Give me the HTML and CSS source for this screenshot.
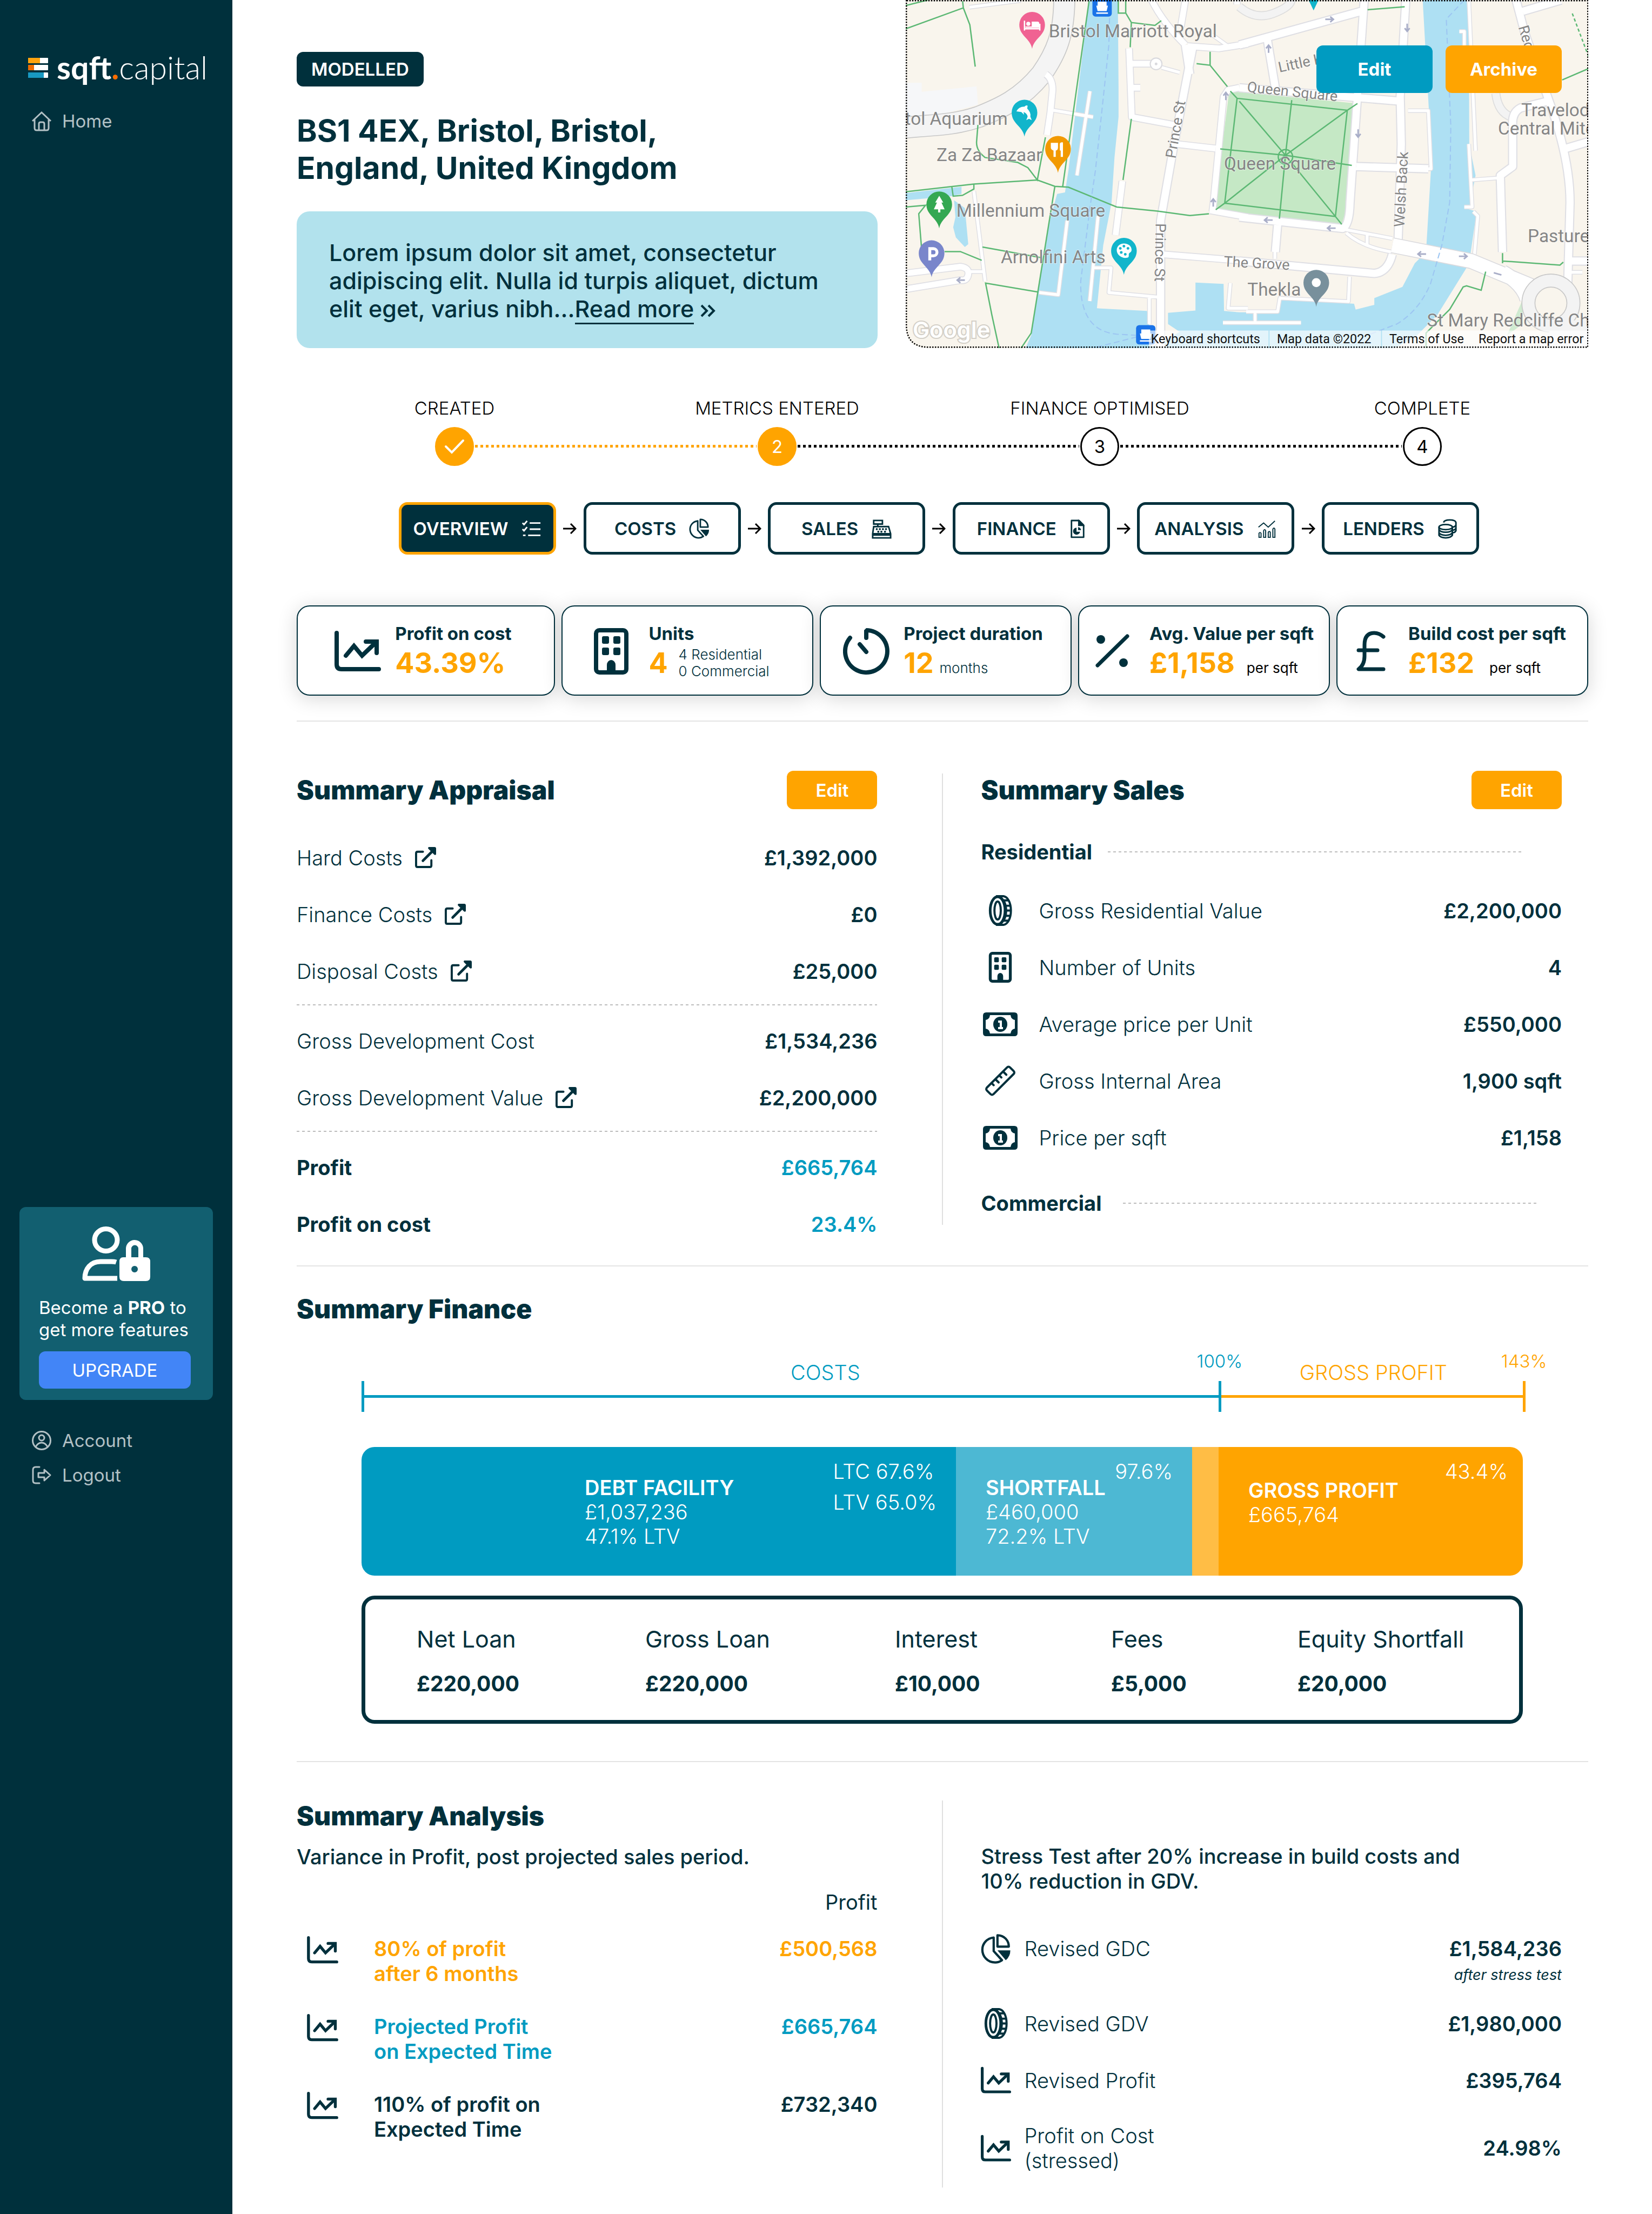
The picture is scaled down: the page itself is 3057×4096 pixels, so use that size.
FILE: index.html
```html
<!DOCTYPE html>
<html lang="en">
<head>
<meta charset="utf-8">
<title>sqft.capital – BS1 4EX, Bristol</title>
<meta name="viewport" content="width=device-width, initial-scale=1">
<link rel="stylesheet" href="styles.css">
</head>
<body>
<svg class="sprite" aria-hidden="true">
  <symbol id="i-trend" viewBox="0 0 86 76"><path d="M4 4V62Q4 71 13 71H82M21 46 36 28 51 46 76 22" fill="none" stroke="currentColor" stroke-width="8" stroke-linecap="round" stroke-linejoin="miter"/><path d="M58 20H78V41" fill="none" stroke="currentColor" stroke-width="8" stroke-linecap="round"/></symbol>
  <symbol id="i-building" viewBox="0 0 64 86"><rect x="4" y="4" width="56" height="78" rx="6" fill="none" stroke="currentColor" stroke-width="8"/><g fill="currentColor"><rect x="15" y="15" width="13" height="14" rx="3"/><rect x="36" y="15" width="13" height="14" rx="3"/><rect x="15" y="36" width="13" height="14" rx="3"/><rect x="36" y="36" width="13" height="14" rx="3"/><path d="M24 82V68a8 9 0 0 1 16 0V82Z"/></g></symbol>
  <symbol id="i-open" viewBox="0 0 40 40"><path d="M15 9H5Q2 9 2 12V35Q2 38 5 38H28Q31 38 31 35V25" fill="none" stroke="currentColor" stroke-width="4" stroke-linecap="round"/><path d="M15 26 34 7" stroke="currentColor" stroke-width="5" stroke-linecap="round"/><path d="M26 0H37Q40 0 40 3V14Q38 16 36 14L25 3Q24 1 26 0Z" fill="currentColor"/></symbol>
  <symbol id="i-coin" viewBox="0 0 44 58"><path d="M14 2H28C36 3 42 14 42 29S36 55 28 56H14" fill="none" stroke="currentColor" stroke-width="4"/><ellipse cx="17" cy="29" rx="14" ry="26" fill="none" stroke="currentColor" stroke-width="5"/><ellipse cx="17" cy="29" rx="6" ry="17" fill="none" stroke="currentColor" stroke-width="4"/><path d="M27 10H37M30 20H41M31 29H42M30 39H41M27 48H37M22 4Q33 12 33 29T22 54" fill="none" stroke="currentColor" stroke-width="4"/></symbol>
  <symbol id="i-note" viewBox="0 0 64 44"><path fill="currentColor" fill-rule="evenodd" d="M6 0H58Q64 0 64 6V38Q64 44 58 44H6Q0 44 0 38V6Q0 0 6 0ZM13 5Q12 13 5 14V30Q12 31 13 39H51Q52 31 59 30V14Q52 13 51 5Z"/><ellipse cx="32" cy="22" rx="13" ry="14" fill="currentColor"/><path d="M28 17H33V29M28 29H37" fill="none" stroke="#fff" stroke-width="4"/></symbol>
  <symbol id="i-ruler" viewBox="0 0 56 56"><path d="M40 4Q43 1 46 4L52 10Q55 13 52 16L16 52Q13 55 10 52L4 46Q1 43 4 40ZM33 11l6 6M26 18l4 4M19 25l6 6M12 32l4 4" fill="none" stroke="currentColor" stroke-width="4" stroke-linecap="round" stroke-linejoin="round"/></symbol>
  <symbol id="i-pie" viewBox="0 0 40 40"><path d="M17 5C8 6 2 13 2 21C2 30 9 38 19 38C22 38 25 37 28 35L17 23Z" fill="none" stroke="currentColor" stroke-width="3" stroke-linejoin="round"/><path d="M22 2V17H37C37 9 31 2 22 2Z" fill="none" stroke="currentColor" stroke-width="3" stroke-linejoin="round"/><path d="M22 22H39Q39 30 33 35Z" fill="currentColor"/></symbol>
  <symbol id="i-next" viewBox="0 0 26 20"><path d="M1 10H24M15 1 24 10 15 19" fill="none" stroke="currentColor" stroke-width="3"/></symbol>
</svg>

<aside class="sidebar">
  <a class="logo" href="#">
    <svg class="logo-mark" viewBox="0 0 37 37" aria-hidden="true"><g fill="#fff"><rect width="37" height="10" rx="1"/><rect y="13" width="37" height="10" rx="1"/><rect y="27" width="37" height="10" rx="1"/></g><path fill="#ffa30f" d="M0 0h22v10H0z"/><path fill="#f06c00" d="M0 13h11v10H0z"/><path fill="#1899c2" d="M0 27h29v10H0z"/></svg>
    <span class="logo-text"><b>sqft<i>.</i></b>capital</span>
  </a>
  <nav class="side-nav">
    <a href="#"><svg viewBox="0 0 38 38" aria-hidden="true"><path d="M2 19 19 3 36 19M6 16V32Q6 36 10 36H28Q32 36 32 32V16M14 36V24Q14 21 17 21H21Q24 21 24 24V36" fill="none" stroke="currentColor" stroke-width="3"/></svg>Home</a>
  </nav>
  <section class="promo">
    <svg class="promo-icon" viewBox="0 0 126 101" aria-hidden="true"><ellipse cx="44" cy="25" rx="21" ry="20.500" fill="none" stroke="#fff" stroke-width="9"/><path d="M63 66Q60 65 54 65H34C16 65 5 78 5 96H65" fill="none" stroke="#fff" stroke-width="9" stroke-linejoin="round"/><path fill="#fff" fill-rule="evenodd" d="M76 57H81V41A16 16 0 0 1 113 41V57H118Q126 57 126 65V93Q126 101 118 101H77Q69 101 69 93V65Q69 57 76 57ZM91 57H104V41A6 6 0 0 0 91 41ZM97 73a6 6 0 1 0 .1 0Z"/></svg>
    <p>Become a <b>PRO</b> to<br>get more features</p>
    <button type="button">UPGRADE</button>
  </section>
  <nav class="side-nav side-nav-end">
    <a href="#"><svg viewBox="0 0 38 38" aria-hidden="true"><g fill="none" stroke="currentColor" stroke-width="3"><circle cx="19" cy="19" r="16.500"/><circle cx="19" cy="14" r="5"/><path d="M8 31Q12 23 19 23T30 31"/></g></svg>Account</a>
    <a href="#"><svg viewBox="0 0 38 38" aria-hidden="true"><path d="M15 4H8Q3 4 3 9V29Q3 34 8 34H15M13 15H24V9L35 19 24 29V23H13Z" fill="none" stroke="currentColor" stroke-width="3" stroke-linecap="round" stroke-linejoin="round"/></svg>Logout</a>
  </nav>
</aside>

<main>
  <header class="intro">
    <div class="intro-text">
      <span class="badge">MODELLED</span>
      <h1>BS1 4EX, Bristol, Bristol,<br>England, United Kingdom</h1>
      <p class="blurb">Lorem ipsum dolor sit amet, consectetur<br>adipiscing elit. Nulla id turpis aliquet, dictum<br>elit eget, varius nibh...<a href="#">Read more</a> <svg viewBox="0 0 28 24" aria-hidden="true"><path d="M2 2 12 12 2 22M15 2 25 12 15 22" fill="none" stroke="currentColor" stroke-width="4"/></svg></p>
    </div>
    <div class="map">
      <svg class="map-art" viewBox="47 0 3035 1547" preserveAspectRatio="xMidYMid slice" role="img" aria-label="Map of central Bristol">
        <defs>
          <g id="w-s"><path d="M330 32 560 2M350 850 400 1250M330 1207H390M703 490 880 520M866 405 808 780M765 980 725 1310 640 1300M902 960 865 1338M880 1190H960L950 1300 1165 1320M1130 1320V1440M1185 300 1265 322M1490 1258 1480 1370H1568M1410 155 1480 205M1457 1434H1804M2280 492H2370L2382 750H2040M2000 1020 2210 1060M2005 1035Q2080 1100 2210 1120M2098 1045V1085M2020 1230 2015 1340 1710 1325 1700 1385H1560M1600 1385V1434M2508 140H2530V210M2550 0 2580 670M2550 640 2565 920H2530M2560 800 2690 790M2570 940 2590 960 2575 1130M2980 1210H3055M1688 1060V1150"/></g>
          <g id="w-m"><path d="M670 330Q700 350 700 400L690 500 675 600M1040 215 1052 520 1240 555M1050 283H1160M1055 390H1090M1010 805 980 1045M1250 640 1425 660M1185 1130 1560 1160M47 1215 290 1185Q330 1190 325 1220T290 1245L47 1285M1300 205 1440 215 1568 195M1140 0Q1190 100 1290 200M1290 0 1270 120M1400 935 1568 965M1520 0V20"/><path d="M1530 390 1480 400 1460 430 1415 900 1410 940"/></g>
          <g id="w-l"><path d="M1325 200 1240 640 1180 980V1548M1290 200 1310 330M1530 200 2080 48M1530 390 2250 450M1530 965 1990 1015Q2020 1000 2022 900L2085 0M2270 0 2245 430 2250 640 2235 1090M1655 180 1690 390M1700 1000 1690 1120M2050 740 2370 750M1530 1160 2130 1215Q2190 1210 2210 1130M2760 0 2800 150 2900 430Q3000 700 3000 900L2990 1260M2790 50 2960 0M2980 660 3082 630M2990 1160H3082M2900 450 2780 480Q2740 500 2745 560V740L2690 780 2700 1120"/></g>
        </defs>
        <rect class="land" x="47" width="3035" height="1547"/>
        <path fill="#f6f7f9" d="M47 368H118V408L362 384 368 465 200 510 47 525Z"/>
        <path class="water" d="M862 0H990L993 380V520L975 700 962 900 925 1090 897 1370 1120 1382 1140 1547H580L605 1490 635 1300 690 970 720 862 755 855 770 760Z"/>
        <path class="water" d="M2345 0H2550L2552 640 2580 780 2550 930 2585 940 2558 1125 2540 1190 2410 1400 2310 1500 2220 1547H1130L1265 1475 1213 1440V1390L1335 1380V1256L1460 1262 1462 1382 1530 1388H1690L1715 1325 2040 1350 2047 1376 2130 1355V1325L2255 1275 2310 1170 2330 1150 2362 1085 2385 700 2372 480Z"/>
        <path class="water" d="M47 858 295 830V862L250 872 47 890ZM262 890 310 925 325 1085 310 1098 270 1055 258 1010 268 965Z"/>
        <path fill="#c5e8c5" d="M1485 405 2055 460 2022 880 1985 997 1425 935 1460 600Z"/>
        <path fill="#cfead0" d="M2790 1330 2720 1490 2790 1440Z"/>
        <g class="major"><path d="M752 0C750 150 720 230 650 330C560 440 470 480 370 520C250 560 150 555 47 567"/></g>
        <g class="major in"><path d="M752 0C750 150 720 230 650 330C560 440 470 480 370 520C250 560 150 555 47 567"/></g>
        <path d="M1530 30Q1600 90 1680 60T1760 0M2670 415Q2680 500 2740 520" fill="none" stroke="#ddd" stroke-width="40"/><path d="M1530 30Q1600 90 1680 60T1760 0M2670 415Q2680 500 2740 520" fill="none" stroke="#f3f3f3" stroke-width="32"/>
        <g class="case"><use href="#w-s" stroke-width="20"/><use href="#w-m" stroke-width="34"/><use href="#w-l" stroke-width="42"/></g>
        <g class="road"><use href="#w-s" stroke-width="13"/><use href="#w-m" stroke-width="26"/><use href="#w-l" stroke-width="32"/></g>
        <path d="M2210 1090 2560 1160 2850 1280M2700 1210Q2790 1260 2810 1330" fill="none" stroke="#dadade" stroke-width="70"/>
        <path d="M2210 1090 2560 1160 2850 1280M2700 1210Q2790 1260 2810 1330" fill="none" stroke="#fff" stroke-width="62"/>
        <circle cx="2915" cy="1347" r="100" fill="none" stroke="#c8c8c8" stroke-width="62"/><path d="M2930 1450Q2980 1420 3082 1420V1547H2840Z" fill="#f3f3f3"/><circle cx="2915" cy="1347" r="100" fill="none" stroke="#f3f3f3" stroke-width="54"/>
        <circle cx="1160" cy="284" r="26" fill="#fff" stroke="#dadade" stroke-width="5"/><circle cx="1160" cy="284" r="6" fill="#dadade"/>
        <path class="walk" d="M47 25 145 0M47 128 303 35 300 5M303 35 332 110 356 296M862 5 745 828M668 610 632 800 590 745 545 722 400 700Q360 670 362 630L368 555M47 852 350 818 632 800 710 828 770 832 985 920 1165 938 1310 958 1395 950M710 828 605 1480 560 1547M350 820V840L300 868 258 872 252 830M47 920 135 912 105 950 118 1110M220 1118H290L385 1157M388 1098 650 1145M462 1547 430 1400 402 1258 632 1297M992 0V58H1025V0M1025 58 1050 100 1155 113 1183 92M1050 100 1045 210M1050 528 1013 800M1340 283 1400 290V230M1400 290 1477 385M1490 405 1520 437 2010 490 2055 460M2010 490 1957 962 1985 997M1957 962 1465 903 1425 932M1520 437 1465 903M1530 450 1735 690 1957 962M2010 490 1735 690 1465 903M1445 662 1735 690 2030 735M1763 445 1735 690 1708 972M2100 43 2265 30M2965 355 3082 305M2700 1125V1170M2700 1160 2955 1178 2970 1165M2625 1207 2605 1290 2540 1270 2525 1275 2465 1375 2360 1480V1547"/>
        <circle class="walk" cx="1735" cy="697" r="32" fill="#c5e8c5"/>
        <path class="walk" stroke-dasharray="14 10" d="M3010 60 3082 250"/>
        <path d="M955 0 950 200 915 530 890 760 865 930 825 1250Q820 1470 985 1485L1070 1490M1075 1497 880 1547M2530 0 2450 85 2470 560 2465 900 2430 1090 2380 1260Q2330 1380 2230 1440L2100 1490" fill="none" stroke="#9dc6f2" stroke-width="5" stroke-dasharray="26 14"/>
        <g fill="none" stroke="#a9aec8" stroke-width="7"><path d="M1912 86h38m-16-12 14 12-14 12M1660 235v-32m-11 12 11-14 11 14M2276 105v32m-11-12 11 14 11-14M2058 575v32m-11-12 11 14 11-14M1678 978h-38m16-12-14 12 14 12M1958 1014h-38m16-12-14 12 14 12M2360 1129h-38m16-12-14 12 14 12M2506 1139h38m-16-12 14 12-14 12M2695 1222l-34-10M310 1245h-34m14-12-14 12 14 12M1470 445v-32m-11 12 11-14 11 14M1414 918v-32m-11 12 11-14 11 14"/></g>
        <g class="place">
          <text x="683" y="165">Bristol Marriott Royal</text>
          <text x="500" y="556" text-anchor="end">Bristol Aquarium</text>
          <text x="184" y="716">Za Za Bazaar</text>
          <text x="272" y="963">Millennium Square</text>
          <text x="470" y="1169">Arnolfini Arts</text>
          <text x="1462" y="755">Queen Square</text>
          <text x="1566" y="1313">Thekla</text>
          <text x="2783" y="516">Travelodge</text>
          <text x="2680" y="597">Central Mitchell</text>
          <text x="2812" y="1077">Pastures</text>
          <text x="2364" y="1450">St Mary Redcliffe Church</text>
        </g>
        <g class="street">
          <text transform="translate(1246 706) rotate(-80)">Prince St</text>
          <text transform="translate(1158 992) rotate(91)">Prince St</text>
          <text transform="translate(1708 322) rotate(-12)">Little King St</text>
          <text transform="translate(1563 408) rotate(6)">Queen Square</text>
          <text transform="translate(1460 1184) rotate(3)">The Grove</text>
          <text transform="translate(2263 1010) rotate(-87)">Welsh Back</text>
          <text transform="translate(2770 120) rotate(74)">Redcliff St</text>
        </g>
        <g class="pins">
          <g transform="translate(609 110)"><path fill="#f06292" d="M0 107C-8 60-57 50-57 0A57 57 0 1 1 57 0C57 50 8 60 0 107Z"/><path d="M-34-18V26M-34 18H34M34-4V26" fill="none" stroke="#fff" stroke-width="6"/><path d="M-30 14V8H-2V-14H24Q32-14 32-4V14Z" fill="#fff"/><circle cx="-17" cy="-4" r="9" fill="#fff"/></g>
          <g transform="translate(575 500)"><path fill="#12b5cb" d="M0 107C-8 60-57 50-57 0A57 57 0 1 1 57 0C57 50 8 60 0 107Z"/><path fill="#fff" d="M-36-5Q-26-26 0-26Q8-34 14-30L12-18Q30 0 26 18L32 34 20 28 8 34 14 18Q10 2-4-2L-2 10-14-2Z"/></g>
          <g transform="translate(724 661)"><path fill="#f29900" d="M0 107C-8 60-57 50-57 0A57 57 0 1 1 57 0C57 50 8 60 0 107Z"/><path fill="#fff" d="M-32-26H0V-6Q0 6-10 8V36H-20V8Q-32 4-32-6ZM8-22Q10-30 22-28V36H12V8H8Z"/></g>
          <g transform="translate(196 908)"><path fill="#34a853" d="M0 107C-8 60-57 50-57 0A57 57 0 1 1 57 0C57 50 8 60 0 107Z"/><path fill="#fff" d="M0-38 18-8H10L24 22H5V36H-5V22H-24L-10-8H-18Z"/></g>
          <g transform="translate(162 1125)"><path fill="#7986cb" d="M0 107C-8 60-57 50-57 0A57 57 0 1 1 57 0C57 50 8 60 0 107Z"/><path d="M-8 32V-20H8A16 16 0 0 1 8 12H-8" fill="none" stroke="#fff" stroke-width="13"/></g>
          <g transform="translate(1017 1114)"><path fill="#12b5cb" d="M0 107C-8 60-57 50-57 0A57 57 0 1 1 57 0C57 50 8 60 0 107Z"/><path fill="#fff" d="M0-32C20-32 34-20 34-4C34 8 24 8 22 14C20 22 26 32 10 32C-10 34-32 18-32-2C-32-20-18-32 0-32Z"/><g fill="#12b5cb"><circle cx="-16" cy="-10" r="6"/><circle cx="0" cy="-20" r="6"/><circle cx="18" cy="-10" r="6"/><circle cx="-12" cy="8" r="6"/><circle cx="6" cy="16" r="6"/></g></g>
          <g transform="translate(1872 1256)"><path fill="#78909c" d="M0 107C-8 60-57 50-57 0A57 57 0 1 1 57 0C57 50 8 60 0 107Z"/><circle r="20" fill="#fff"/></g>
          <path fill="#12b5cb" d="M1838 0H1882L1860 46Z"/>
          <g transform="translate(920 31)"><rect x="-43" y="-43" width="86" height="86" rx="14" fill="#1a73e8"/><path fill="#fff" d="M-20-24H20V-6H26L20 18H-20L-26-6H-20ZM-26 24H26V30H-26Z"/></g>
          <g transform="translate(1114 1488)"><rect x="-43" y="-43" width="86" height="86" rx="14" fill="#1a73e8"/><path fill="#fff" d="M-20-24H20V-6H26L20 18H-20L-26-6H-20ZM-26 24H26V30H-26Z"/></g>
        </g>
        <text class="brand" x="78" y="1502">Google</text>
        <path fill="#fff" fill-opacity=".65" d="M1128 1469H1660V1547H1128ZM1664 1469H2160V1547H1664ZM2164 1469H3082V1547H2164Z"/>
        <g class="credits"><text x="1137" y="1525">Keyboard shortcuts</text><text x="1697" y="1525">Map data ©2022</text><text x="2197" y="1525">Terms of Use</text><text x="2593" y="1525">Report a map error</text></g>
        <path fill="#fff" d="M47 1447V1547H147Q47 1547 47 1447Z"/>
        <path d="M50 0V1447Q52 1542 147 1543H3079V3H50" fill="none" stroke="#000" stroke-width="6" stroke-dasharray="6 6"/>
      </svg>
      <div class="map-actions">
        <button class="btn btn-lg btn-teal" type="button">Edit</button>
        <button class="btn btn-lg" type="button">Archive</button>
      </div>
    </div>
  </header>

  <ol class="steps">
    <li class="step done"><span>CREATED</span><i><svg viewBox="0 0 36 28" aria-hidden="true"><path d="M2 14 13 25 34 3" fill="none" stroke="#fff" stroke-width="4" stroke-linecap="round"/></svg></i></li>
    <li class="link done" aria-hidden="true"></li>
    <li class="step done"><span>METRICS ENTERED</span><i>2</i></li>
    <li class="link" aria-hidden="true"></li>
    <li class="step"><span>FINANCE OPTIMISED</span><i>3</i></li>
    <li class="link" aria-hidden="true"></li>
    <li class="step"><span>COMPLETE</span><i>4</i></li>
  </ol>

  <nav class="tabs" aria-label="Project sections">
    <a class="tab active" href="#">OVERVIEW<svg viewBox="0 0 40 40" aria-hidden="true"><path d="M3 9 6 12 12 5M3 21 6 24 12 17M17 9H38M17 21H38M14 33H38M4 33H9" fill="none" stroke="currentColor" stroke-width="3"/></svg></a>
    <svg class="next" aria-hidden="true"><use href="#i-next"/></svg>
    <a class="tab" href="#">COSTS<svg aria-hidden="true"><use href="#i-pie"/></svg></a>
    <svg class="next" aria-hidden="true"><use href="#i-next"/></svg>
    <a class="tab" href="#">SALES<svg viewBox="0 0 40 40" aria-hidden="true"><g fill="none" stroke="currentColor" stroke-width="3"><path d="M5 4H22V11H5ZM13 11V16M5 16H34L38 30V38H3V30ZM3 30H38"/></g><g fill="currentColor"><path d="M3 31H38V34H3Z"/><circle cx="11" cy="21" r="2"/><circle cx="17" cy="21" r="2"/><circle cx="23" cy="21" r="2"/><circle cx="29" cy="21" r="2"/><circle cx="14" cy="26" r="2"/><circle cx="20" cy="26" r="2"/><circle cx="27" cy="26" r="2"/></g></svg></a>
    <svg class="next" aria-hidden="true"><use href="#i-next"/></svg>
    <a class="tab" href="#">FINANCE<svg class="slim" viewBox="4 0 32 40" aria-hidden="true"><path d="M8 4H23L32 13V37H8Z" fill="none" stroke="currentColor" stroke-width="3" stroke-linejoin="round"/><path d="M22 4V14H32Z" fill="currentColor" stroke="currentColor" stroke-width="2"/><path d="M18 18V26H25A7 7 0 1 1 18 18ZM21 17A7 7 0 0 1 27 23H21Z" fill="currentColor"/></svg></a>
    <svg class="next" aria-hidden="true"><use href="#i-next"/></svg>
    <a class="tab" href="#">ANALYSIS<svg viewBox="0 0 40 40" aria-hidden="true"><path d="M4 17 14 9 23 17 36 5M5 37V29Q7 26 9 29V37ZM14 37V24Q16 20 18 24V37ZM23 37V27Q25 24 27 27V37ZM32 37V21Q34 17 36 21V37Z" fill="none" stroke="currentColor" stroke-width="2"/></svg></a>
    <svg class="next" aria-hidden="true"><use href="#i-next"/></svg>
    <a class="tab" href="#">LENDERS<svg viewBox="0 0 40 40" aria-hidden="true"><g fill="none" stroke="currentColor" stroke-width="3"><ellipse cx="16" cy="17" rx="13" ry="5"/><path d="M3 17V33Q6 38 16 38T29 33V17M3 22Q6 27 16 27T29 22M3 28Q6 33 16 33T29 28M12 8Q13 3 24 3T36 8V24Q34 28 29 28M36 13Q34 17 29 17M36 19Q34 23 29 23"/></g></svg></a>
  </nav>

  <section class="metrics" aria-label="Key metrics">
    <article class="metric"><svg aria-hidden="true"><use href="#i-trend"/></svg><div><h3>Profit on cost</h3><p><b>43.39%</b></p></div></article>
    <article class="metric metric-units"><svg aria-hidden="true"><use href="#i-building"/></svg><div><h3>Units</h3><p><b>4</b><span>4 Residential<br>0 Commercial</span></p></div></article>
    <article class="metric metric-time"><svg viewBox="0 0 86 86" aria-hidden="true"><path d="M43 18V4A39 39 0 1 1 13 18M31 30 43 44" fill="none" stroke="currentColor" stroke-width="8" stroke-linecap="round" stroke-linejoin="bevel"/></svg><div><h3>Project duration</h3><p><b>12</b><span>months</span></p></div></article>
    <article class="metric metric-rate"><svg viewBox="0 0 86 86" aria-hidden="true"><path d="M71 15 16 69" stroke="currentColor" stroke-width="7" stroke-linecap="round"/><circle cx="22" cy="21" r="8" fill="currentColor"/><circle cx="64" cy="64" r="8" fill="currentColor"/></svg><div><h3>Avg. Value per sqft</h3><p><b>£1,158</b><span>per sqft</span></p></div></article>
    <article class="metric metric-rate metric-build"><svg viewBox="0 0 86 86" aria-hidden="true"><path d="M66 16Q58 9 49 9Q31 9 31 31V52Q31 68 20 76H66M20 41H55" fill="none" stroke="currentColor" stroke-width="7" stroke-linecap="round" stroke-linejoin="round"/></svg><div><h3>Build cost per sqft</h3><p><b>£132</b><span>per sqft</span></p></div></article>
  </section>

  <section class="split split-top">
    <div class="appraisal">
      <div class="head"><h2>Summary Appraisal</h2><button class="btn" type="button">Edit</button></div>
      <dl class="rows">
        <div><dt>Hard Costs <a href="#" aria-label="Open hard costs"><svg><use href="#i-open"/></svg></a></dt><dd>£1,392,000</dd></div>
        <div><dt>Finance Costs <a href="#" aria-label="Open finance costs"><svg><use href="#i-open"/></svg></a></dt><dd>£0</dd></div>
        <div><dt>Disposal Costs <a href="#" aria-label="Open disposal costs"><svg><use href="#i-open"/></svg></a></dt><dd>£25,000</dd></div>
      </dl>
      <hr class="dots">
      <dl class="rows">
        <div><dt>Gross Development Cost</dt><dd>£1,534,236</dd></div>
        <div><dt>Gross Development Value <a href="#" aria-label="Open gross development value"><svg><use href="#i-open"/></svg></a></dt><dd>£2,200,000</dd></div>
      </dl>
      <hr class="dots">
      <dl class="rows total">
        <div><dt>Profit</dt><dd>£665,764</dd></div>
        <div><dt>Profit on cost</dt><dd>23.4%</dd></div>
      </dl>
    </div>
    <div class="rule"></div>
    <div class="sales">
      <div class="head"><h2>Summary Sales</h2><button class="btn" type="button">Edit</button></div>
      <h3 class="group">Residential</h3>
      <dl class="rows icons">
        <div><dt><svg><use href="#i-coin"/></svg>Gross Residential Value</dt><dd>£2,200,000</dd></div>
        <div><dt><svg><use href="#i-building"/></svg>Number of Units</dt><dd>4</dd></div>
        <div><dt><svg class="wide"><use href="#i-note"/></svg>Average price per Unit</dt><dd>£550,000</dd></div>
        <div><dt><svg><use href="#i-ruler"/></svg>Gross Internal Area</dt><dd>1,900 sqft</dd></div>
        <div><dt><svg class="wide"><use href="#i-note"/></svg>Price per sqft</dt><dd>£1,158</dd></div>
      </dl>
      <h3 class="group group-late">Commercial</h3>
    </div>
  </section>

  <section class="finance">
    <h2>Summary Finance</h2>
    <div class="chart">
      <div class="axis">
        <div class="span costs"><span>COSTS</span><i></i><em>100%</em></div>
        <div class="span gross"><span>GROSS PROFIT</span><i></i><em>143%</em></div>
      </div>
      <div class="stack">
        <div class="seg debt"><p><b>DEBT FACILITY</b><br>£1,037,236<br>47.1% LTV</p><p class="pct">LTC 67.6%<br>LTV 65.0%</p></div>
        <div class="seg short"><p><b>SHORTFALL</b><br>£460,000<br>72.2% LTV</p><p class="pct">97.6%</p></div>
        <div class="seg gap"></div>
        <div class="seg profit"><p><b>GROSS PROFIT</b><br>£665,764</p><p class="pct">43.4%</p></div>
      </div>
      <div class="loan">
        <table>
          <colgroup><col class="c1"><col class="c2"><col class="c3"><col class="c4"><col class="c5"></colgroup>
          <thead><tr><th>Net Loan</th><th>Gross Loan</th><th>Interest</th><th>Fees</th><th>Equity Shortfall</th></tr></thead>
          <tbody><tr><td>£220,000</td><td>£220,000</td><td>£10,000</td><td>£5,000</td><td>£20,000</td></tr></tbody>
        </table>
      </div>
    </div>
  </section>

  <section class="split analysis">
    <div>
      <h2>Summary Analysis</h2>
      <p class="lead">Variance in Profit, post projected sales period.</p>
      <p class="col-head">Profit</p>
      <dl class="cases">
        <div class="low"><dt><svg><use href="#i-trend"/></svg><span>80% of profit<br>after 6 months</span></dt><dd>£500,568</dd></div>
        <div class="mid"><dt><svg><use href="#i-trend"/></svg><span>Projected Profit<br>on Expected Time</span></dt><dd>£665,764</dd></div>
        <div><dt><svg><use href="#i-trend"/></svg><span>110% of profit on<br>Expected Time</span></dt><dd>£732,340</dd></div>
      </dl>
    </div>
    <div class="rule"></div>
    <div class="stress">
      <p class="lead">Stress Test after 20% increase in build costs and<br>10% reduction in GDV.</p>
      <dl class="rows icons tight">
        <div class="noted"><dt><svg><use href="#i-pie"/></svg>Revised GDC</dt><dd>£1,584,236<small>after stress test</small></dd></div>
        <div><dt><svg><use href="#i-coin"/></svg>Revised GDV</dt><dd>£1,980,000</dd></div>
        <div><dt><svg><use href="#i-trend"/></svg>Revised Profit</dt><dd>£395,764</dd></div>
        <div class="tall"><dt><svg><use href="#i-trend"/></svg><span>Profit on Cost<br>(stressed)</span></dt><dd>24.98%</dd></div>
      </dl>
    </div>
  </section>
</main>
</body>
</html>
```
FILE: styles.css
```css
:root {
  --navy: #00303c;
  --teal: #009bc1;
  --orange: #ffa400;
  --line: #e4e4e4;
}
* { box-sizing: border-box; }
body {
  margin: 0;
  display: flex;
  min-height: 100vh;
  background: #fff;
  color: var(--navy);
  font: 400 38px/46px Inter, "Liberation Sans", sans-serif;
}
h1, h2, h3, p, dl, dd, ol { margin: 0; padding: 0; }
a { color: inherit; text-decoration: none; }
button { font: inherit; border: 0; cursor: pointer; }
svg { flex: none; display: block; }
.sprite { position: absolute; width: 0; height: 0; }

/* Sidebar */
.sidebar {
  flex: 0 0 430px;
  background: var(--navy);
  display: flex;
  flex-direction: column;
  padding: 92px 36px 0;
}
.logo { display: flex; align-items: center; gap: 16px; margin-left: 16px; height: 66px; }
.logo-mark { width: 37px; height: 37px; }
.logo-text { font: 300 59px/66px Lato, sans-serif; color: #fff; }
.logo-text b { font-weight: 700; }
.logo-text i { font-style: normal; color: #ff6d00; }
.side-nav { display: flex; flex-direction: column; gap: 24px; padding-left: 22px; margin-top: 46px; }
.side-nav a { display: flex; align-items: center; gap: 19px; font-size: 33px; line-height: 40px; color: #b3c1c5; }
.side-nav svg { width: 38px; height: 38px; }
.promo {
  margin-top: 1989px;
  padding: 36px 36px 21px;
  border-radius: 12px;
  background: #125f70;
  color: #fff;
  display: flex;
  flex-direction: column;
}
.promo-icon { width: 126px; height: 101px; align-self: center; }
.promo p { font-size: 33px; line-height: 41px; margin-top: 29px; white-space: nowrap; }
.promo button { height: 69px; margin: 19px 5px 0 0; border-radius: 12px; background: #4285f7; color: #fff; font-size: 33px; }
.side-nav-end { margin-top: 55px; }

/* Page header */
main { flex: 1; min-width: 0; padding: 0 118px 48px 119px; }
.intro { display: grid; grid-template-columns: 1075fr 1264fr; gap: 52px; height: 644px; }
.intro-text { padding-top: 96px; }
.badge {
  display: inline-block;
  padding: 12px 27px;
  border-radius: 12px;
  background: var(--navy);
  color: #fff;
  font-size: 33px;
  font-weight: 600;
  line-height: 40px;
  vertical-align: top;
}
h1 { margin-top: 47px; font-size: 57px; line-height: 69px; font-weight: 700; }
.blurb { margin-top: 46px; padding: 50px 60px 47px; border-radius: 24px; background: #b2e2ed; font-size: 43px; line-height: 52px; font-weight: 500; white-space: nowrap; }
.blurb a { border-bottom: 3px solid; }
.blurb svg { display: inline-block; width: 28px; height: 24px; }
.map { position: relative; }
.map-art { width: 100%; height: 644px; font-family: Roboto, sans-serif; }
.land { fill: #f9f5ed; }
.water { fill: #aee0f3; }
.major { fill: none; stroke: #c8c8c8; stroke-width: 98; }
.major.in { stroke: #f4f4f4; stroke-width: 90; }
.case { fill: none; stroke: #dfdfe4; stroke-linejoin: round; }
.road { fill: none; stroke: #fff; stroke-linejoin: round; }
.walk { fill: none; stroke: #5cb874; stroke-width: 6; }
.place text, .street text { fill: #858585; paint-order: stroke; stroke: #fff; stroke-opacity: .5; stroke-width: 5; }
.place { font-size: 80px; }
.street { font-size: 65px; }
.brand { font: 600 100px Inter, sans-serif; fill: #fff; stroke: #d3cfc7; stroke-width: 10; paint-order: stroke; }
.credits { font-size: 56px; fill: #111; }
.map-actions { position: absolute; top: 84px; right: 49px; display: flex; gap: 24px; }
.btn { width: 167px; height: 71px; padding: 0; border-radius: 12px; background: var(--orange); color: #fff; font-size: 33px; font-weight: 600; }
.btn-lg { width: 215px; height: 88px; font-weight: 700; }
.btn-teal { background: var(--teal); }

/* Progress */
.steps { display: flex; align-items: flex-end; margin: 91px 271px 0 256px; list-style: none; color: #000; font-size: 33px; line-height: 40px; font-weight: 300; }
.step { flex: none; width: 72px; display: flex; flex-direction: column; align-items: center; gap: 15px; white-space: nowrap; }
.step i { width: 72px; height: 72px; border: 3px solid #000; border-radius: 50%; display: grid; place-items: center; font-style: normal; font-weight: 400; font-size: 33px; }
.step.done i { border-color: var(--orange); background: var(--orange); color: #fff; }
.step svg { width: 36px; height: 28px; }
.link { flex: 1; height: 5px; margin: 0 2px 34px; background: repeating-linear-gradient(90deg, #000 0 5px, transparent 5px 10px); }
.link.done { background: repeating-linear-gradient(90deg, var(--orange) 0 5px, transparent 5px 10px); }

.tabs { display: flex; align-items: center; justify-content: space-between; margin: 67px 202px 0 189px; }
.tab { flex: 0 0 291px; height: 97px; border: 5px solid var(--navy); border-radius: 16px; display: flex; align-items: center; justify-content: center; gap: 24px; font-size: 33px; line-height: 40px; font-weight: 600; }
.tab.active { background: var(--navy); border-color: var(--orange); color: #fff; }
.tab svg { width: 38px; height: 38px; }
.tab .slim { width: 30px; }
.next { width: 26px; height: 20px; color: #000; }

/* Metric cards */
.metrics { display: grid; grid-template-columns: 478fr 466fr 466fr 466fr 466fr; gap: 12px; margin-top: 94px; padding-bottom: 46px; border-bottom: 2px solid var(--line); }
.metric { height: 167px; padding: 2px 10px 0 0; border: 2px solid var(--navy); border-radius: 24px; background: #fff; box-shadow: 0 5px 36px rgba(0, 0, 0, .16); display: flex; align-items: center; justify-content: center; gap: 26px; white-space: nowrap; }
.metric svg { width: 86px; height: 86px; }
.metric h3 { font-size: 33px; line-height: 40px; font-weight: 700; }
.metric p { display: flex; align-items: baseline; margin-top: 3px; font-size: 26px; line-height: 31px; font-weight: 300; }
.metric b { font-size: 52px; line-height: 63px; font-weight: 700; color: var(--orange); }
.metric-units { padding-right: 32px; }
.metric-units p { gap: 20px; align-items: center; }
.metric-time p { gap: 11px; }
.metric-rate p { gap: 22px; }
.metric-rate span { color: #000; font-weight: 400; }
.metric-build { padding-right: 20px; }
.metric-build p { gap: 28px; }

/* Two-column sections */
h2 { font-size: 48px; line-height: 58px; font-weight: 900; }
.split { display: grid; grid-template-columns: 1195fr 2px 1145fr; padding-right: 49px; }
.split > :first-child { margin-right: 120px; }
.split > :last-child { margin-left: 70px; }
.rule { background: #dfdfdf; }
.split-top { padding-top: 91px; padding-bottom: 24px; border-bottom: 2px solid var(--line); }
.split-top .rule { margin: 5px 0 51px; }
.head { display: flex; align-items: center; justify-content: space-between; height: 71px; }
.appraisal .head { margin-bottom: 37px; }
.rows > div { display: flex; align-items: center; justify-content: space-between; height: 105px; }
dt { font-weight: 300; display: flex; align-items: center; }
dd { font-weight: 600; text-align: right; }
.rows a { margin-left: 23px; }
.rows a svg { width: 39px; height: 39px; }
.dots { height: 2px; margin: 9px 0 13px; border: 0; background: repeating-linear-gradient(90deg, #bdbdbd 0 5px, transparent 5px 10px); }
.total dt { font-weight: 700; }
.total dd { color: var(--teal); }
.group { display: flex; align-items: center; justify-content: space-between; height: 60px; margin: 49px 75px 26px 0; font-size: 38px; font-weight: 700; }
.group::after { content: ""; width: 765px; height: 2px; background: repeating-linear-gradient(90deg, #bdbdbd 0 5px, transparent 5px 10px); }
.group-late { margin: 39px 47px 0 0; }
.icons dt svg { width: 72px; height: 57px; margin-right: 35px; }
.icons dt .wide { height: 44px; }

/* Finance */
.finance { padding: 50px 0 69px; border-bottom: 2px solid var(--line); }
.chart { margin: 72px 121px 0 120px; }
.axis { display: grid; grid-template-columns: 1590fr 563fr; margin-right: -5px; text-align: center; font-weight: 300; }
.span { position: relative; line-height: 32px; }
.span i { display: flex; height: 57px; border: solid; border-width: 0 5px; align-items: center; }
.span i::before { content: ""; flex: 1; height: 5px; background: currentColor; }
.span em { position: absolute; top: -21px; right: 3px; transform: translateX(50%); font-size: 33px; font-style: normal; }
.costs { color: var(--teal); }
.costs span { padding-left: 126px; }
.gross { color: var(--orange); }
.gross i { border-left: 0; }
.stack { display: grid; grid-template-columns: 1100fr 437fr 49fr 563fr; height: 238px; margin-top: 65px; border-radius: 24px; overflow: hidden; color: #fff; font-weight: 300; line-height: 45px; }
.seg { display: flex; justify-content: space-between; min-width: 0; padding: 17px 36px 0 55px; white-space: nowrap; }
.seg b { font-weight: 600; }
.seg p { padding-top: 36px; }
.seg .pct { padding-top: 0; line-height: 57px; }
.debt { padding-left: 413px; background: var(--teal); }
.short { background: #4db8d3; }
.gap { padding: 0; background: #ffbd45; }
.profit { padding-right: 28px; background: var(--orange); }
.profit p { padding-top: 41px; }
.loan { margin-top: 37px; padding: 31px 107px 26px 95px; border: 7px solid var(--navy); border-radius: 24px; }
table { width: 100%; table-layout: fixed; border-collapse: collapse; }
th, td { height: 83px; padding: 0; text-align: left; white-space: nowrap; }
th { font-size: 43px; font-weight: 400; }
td { font-size: 39px; font-weight: 700; }
.c1 { width: 423px; }
.c2 { width: 462px; }
.c3 { width: 400px; }
.c4 { width: 345px; }
.c5 { width: 303px; }

/* Analysis */
.analysis { padding-top: 71px; }
.lead { font-weight: 500; }
h2 + .lead { margin-top: 23px; }
.col-head { margin-top: 38px; text-align: right; }
.cases { display: grid; gap: 52px; margin-top: 40px; }
.cases > div { display: flex; justify-content: space-between; }
.cases dt, .cases dd { font-weight: 600; }
.cases dt { align-items: flex-start; }
.cases svg { width: 58px; height: 51px; margin: 0 66px 0 19px; color: var(--navy); }
.low { color: var(--orange); }
.mid { color: var(--teal); }
.stress { padding-top: 80px; }
.tight { margin-top: 49px; }
.tight dt svg { width: 56px; margin-right: 24px; }
.tight .noted { height: 139px; align-items: flex-start; padding-top: 30px; }
.noted dt svg { margin: -5px 24px -6px 0; }
small { display: block; font-size: 27px; line-height: 36px; margin-top: 8px; font-style: italic; font-weight: 400; }
.tight .tall { height: 146px; }
```
